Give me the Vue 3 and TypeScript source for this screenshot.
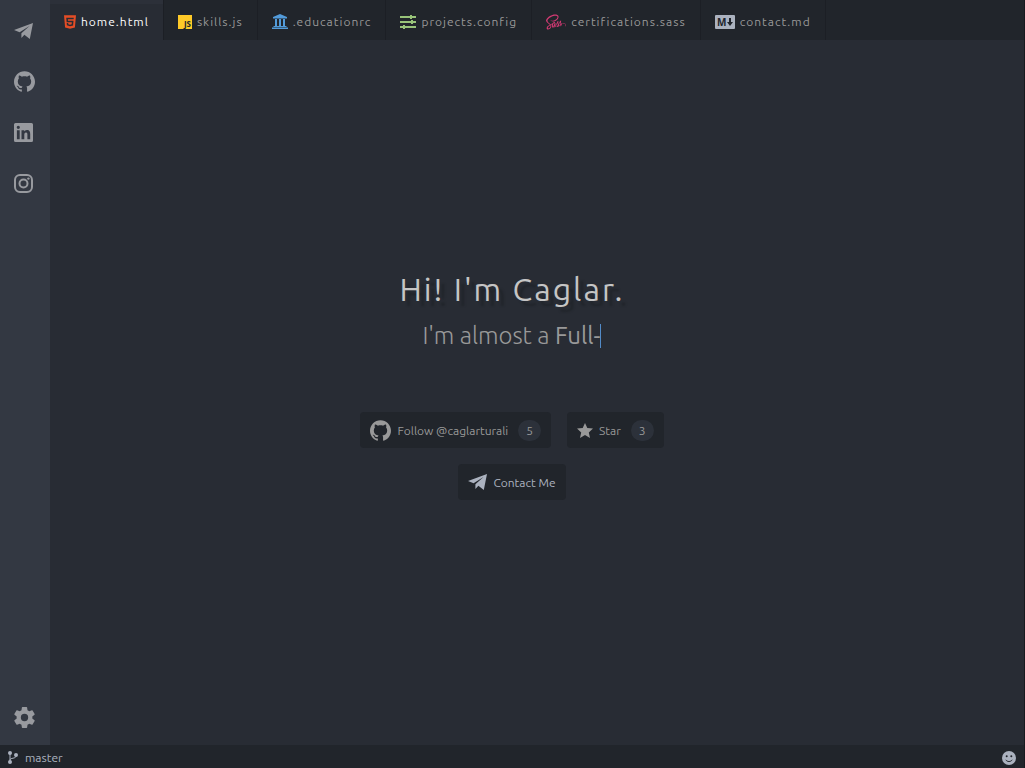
<script setup lang="ts">
interface Tab {
  id: string
  label: string
}

const tabs: Tab[] = [
  { id: 'html', label: 'home.html' },
  { id: 'js', label: 'skills.js' },
  { id: 'education', label: '.educationrc' },
  { id: 'config', label: 'projects.config' },
  { id: 'sass', label: 'certifications.sass' },
  { id: 'markdown', label: 'contact.md' },
]

const activeTab = 'html'

const githubPath =
  'M12 .297c-6.63 0-12 5.373-12 12 0 5.303 3.438 9.8 8.205 11.385.6.113.82-.258.82-.577 0-.285-.01-1.04-.015-2.04-3.338.724-4.042-1.61-4.042-1.61C4.422 18.07 3.633 17.7 3.633 17.7c-1.087-.744.084-.729.084-.729 1.205.084 1.838 1.236 1.838 1.236 1.07 1.835 2.809 1.305 3.495.998.108-.776.417-1.305.76-1.605-2.665-.3-5.466-1.332-5.466-5.93 0-1.31.465-2.38 1.235-3.22-.135-.303-.54-1.523.105-3.176 0 0 1.005-.322 3.3 1.23.96-.267 1.98-.399 3-.405 1.02.006 2.04.138 3 .405 2.28-1.552 3.285-1.23 3.285-1.23.645 1.653.24 2.873.12 3.176.765.84 1.23 1.91 1.23 3.22 0 4.61-2.805 5.625-5.475 5.92.42.36.81 1.096.81 2.22 0 1.606-.015 2.896-.015 3.286 0 .315.21.69.825.57C20.565 22.092 24 17.592 24 12.297c0-6.627-5.373-12-12-12'
const planePath = 'M19 0 0 7l5.600 2.300L15.500 3 7.400 10.200V15l3-3.300 5.400 4.300z'
</script>

<template>
  <div class="app">
    <nav class="sidebar" aria-label="Social links">
      <div class="links">
        <a href="#contact" aria-label="Contact">
          <svg class="plane" viewBox="0 0 19 16"><path :d="planePath" /></svg>
        </a>
        <a href="#github" aria-label="GitHub">
          <svg class="github" viewBox="0 0 24 24"><path :d="githubPath" /></svg>
        </a>
        <a href="#linkedin" aria-label="LinkedIn">
          <svg class="social" viewBox="0 0 19 19">
            <path fill-rule="evenodd" d="M1.500 0h16A1.500 1.500 0 0 1 19 1.500v16a1.500 1.500 0 0 1-1.500 1.500h-16A1.500 1.500 0 0 1 0 17.500v-16A1.500 1.500 0 0 1 1.500 0zM2.900 7.200v9h2.800v-9zM4.300 2.700a1.600 1.600 0 1 0 0 3.200 1.600 1.600 0 0 0 0-3.200zM7.500 7.200v9h2.800v-4.500c0-1.200.3-2.300 1.700-2.300s1.400 1.300 1.400 2.400v4.400h2.800v-5c0-2.400-.5-4.300-3.300-4.300-1.400 0-2.300.8-2.700 1.500V7.200z" />
          </svg>
        </a>
        <a href="#instagram" aria-label="Instagram">
          <svg class="social" viewBox="0 0 19 19">
            <rect class="line" x="1" y="1" width="17" height="17" rx="5" />
            <circle class="line" cx="9.500" cy="9.500" r="4" />
            <circle cx="14.400" cy="4.600" r="1.200" />
          </svg>
        </a>
      </div>
      <button type="button" class="settings" aria-label="Settings">
        <svg viewBox="2 2 20 20">
          <path d="M19.430 12.980c.04-.32.07-.64.07-.98s-.03-.66-.07-.98l2.110-1.650c.19-.15.24-.42.12-.64l-2-3.460c-.12-.22-.39-.3-.61-.22l-2.490 1c-.52-.4-1.080-.73-1.690-.98l-.38-2.650C14.460 2.180 14.250 2 14 2h-4c-.25 0-.46.18-.49.42l-.38 2.650c-.61.25-1.170.59-1.690.98l-2.490-1c-.23-.09-.49 0-.61.22l-2 3.460c-.13.22-.07.49.12.64l2.110 1.650c-.04.32-.07.65-.07.98s.03.66.07.98l-2.110 1.650c-.19.15-.24.42-.12.64l2 3.460c.12.22.39.3.61.22l2.490-1c.52.4 1.080.73 1.690.98l.38 2.650c.03.24.24.42.49.42h4c.25 0 .46-.18.49-.42l.38-2.650c.61-.25 1.170-.59 1.690-.98l2.490 1c.23.09.49 0 .61-.22l2-3.460c.12-.22.07-.49-.12-.64zM12 15.500a3.500 3.500 0 1 1 0-7 3.500 3.500 0 0 1 0 7z" />
        </svg>
      </button>
    </nav>

    <div class="workspace">
      <nav class="tabs" aria-label="Open files">
        <a
          v-for="tab in tabs"
          :key="tab.id"
          :href="'#' + tab.label"
          class="tab"
          :class="{ active: tab.id === activeTab }"
        >
          <svg v-if="tab.id === 'html'" class="icon-html" viewBox="1.500 0 21 24" aria-hidden="true">
            <path d="M1.500 0h21l-1.910 21.563L11.977 24l-8.564-2.438L1.500 0zm7.031 9.750l-.232-2.718 10.059.003.23-2.622L5.412 4.410l.698 8.010h9.126l-.326 3.426-2.910.804-2.955-.81-.188-2.110H6.248l.33 4.171L12 19.351l5.379-1.443.744-8.157H8.531z" />
          </svg>
          <svg v-else-if="tab.id === 'js'" class="icon-js" viewBox="0 0 14 14" aria-hidden="true">
            <rect width="14" height="14" />
            <text x="13" y="12" text-anchor="end">JS</text>
          </svg>
          <svg v-else-if="tab.id === 'education'" class="icon-education" viewBox="0 0 16 15" aria-hidden="true">
            <path d="M8 0l7 3v1.500H1V3zM3 5h2v7H3zM7 5h2v7H7zM11 5h2v7h-2zM1.500 12h13v1h-13zM0 13.500h16V15H0z" />
          </svg>
          <svg v-else-if="tab.id === 'config'" class="icon-config" viewBox="0 0 16 14" aria-hidden="true">
            <path d="M0 1h16v2H0zM0 6h16v2H0zM0 11h16v2H0zM10 0h2v4h-2zM11 5h2v4h-2zM3 10h2v4H3z" />
          </svg>
          <svg v-else-if="tab.id === 'sass'" class="icon-sass" viewBox="0 0 640 512" aria-hidden="true">
            <path d="M551 291.900a131.200 131.200 0 0 0-58 13.500c-5.900-11.900-12-22.300-13-30.100-1.200-9.100-2.500-14.500-1.100-25.300s7.700-26.100 7.600-27.200-1.400-6.600-14.300-6.700-24 2.500-25.300 5.900a122.800 122.800 0 0 0-5.300 19.100c-2.300 11.700-25.800 53.500-39.100 75.300-4.400-8.500-8.100-16-8.900-22-1.200-9.100-2.500-14.500-1.100-25.300s7.700-26.100 7.600-27.200-1.400-6.600-14.300-6.700-24 2.500-25.300 5.900-2.700 11.400-5.300 19.100-33.900 77.300-42.100 95.400c-4.200 9.200-7.800 16.600-10.400 21.600-5 9.500-7.700 14.200-8.900 14.200-.6 0-1.900-8.400.3-19.900 4.700-24.200 15.800-61.800 15.700-63.100-.1-.7 2.100-7.200-7.300-10.700-9.100-3.300-12.400 2.200-13.200 2.200s-1.400 2-1.400 2 10.100-42.400-19.400-42.400c-18.400 0-44 20.200-56.600 38.500-7.900 4.300-25 13.600-43 23.500-6.900 3.800-14 7.700-20.700 11.400-35.800-38.700-103.300-66.700-100.500-118 1-18.700 7.500-67.800 127.100-127.400 98-48.800 176.400-35.400 189.900-5.600 19.400 42.500-41.900 121.600-143.700 133-38.800 4.300-59.200-10.700-64.300-16.300-5.300-5.900-6.100-6.200-8.100-5.100-3.300 1.800-1.200 7 0 10.100 3 7.900 15.500 21.900 36.800 28.900 18.700 6.100 64.200 9.500 119.200-11.800 61.800-23.800 109.900-90.100 95.800-145.600C386.500 18.300 293 .2 204.600 31.600c-52.700 18.700-109.700 48.100-150.700 86.400C5.200 163.600-2.600 203.300.6 219.900c11.400 58.900 92.600 97.300 125.100 125.700-20 10.600-82.200 41.700-98.200 77.200-17.500 38.800 2.900 66.600 16.300 70.400 41.800 11.600 84.600-9.300 107.600-43.600s20.200-79.100 9.200-100.300c12-7.100 24-14.300 36.300-20.800-4 10.800-6.900 23.800-8.400 42.600-1.800 22 7.300 50.500 19.100 61.700 5.200 4.900 11.500 5 15.400 5 13.800 0 20-11.400 26.900-25 8.500-16.600 16-35.900 16-35.900s-9.400 52.200 16.300 52.200c9.400 0 18.800-12.100 23-18.300 4-6.300 14.300-24.500 26.800-49.900 16.200-31.800 31.700-71.500 31.700-71.500a201.200 201.200 0 0 0 6.200 25.800c2.800 9.500 8.700 19.900 13.400 30-5 7-9.900 13.200-15.900 20.900-12.800 15.200-28 32.600-30 37.600-2.400 5.900-1.800 10.300 2.800 13.700 3.400 2.600 9.400 3 15.700 2.500 11.500-.8 19.600-3.600 23.500-5.400a82.200 82.200 0 0 0 20.200-10.600c12.500-9.200 20.100-22.400 19.400-39.800-.4-9.600-3.500-19.200-7.300-28.200 19.100-28.200 38.700-71.900 38.700-71.900a201.200 201.200 0 0 0 6.200 25.800c2.400 8.100 7.100 17 11.400 25.700-18.600 15.100-30.100 32.600-34.100 44.100-7.400 21.300-1.600 30.900 9.300 33.100 4.900 1 11.900-1.300 17.100-3.500a79.500 79.500 0 0 0 21.600-11.100c12.500-9.200 24.600-22.100 23.800-39.600-.3-7.900-2.500-15.800-5.400-23.400 15.700-6.600 36.100-10.200 62.100-7.200 55.700 6.500 66.600 41.300 64.500 55.800s-13.800 22.600-17.700 25-5.100 3.300-4.800 5.100c.5 2.600 2.300 2.500 5.600 1.900 4.600-.8 29.200-11.800 30.300-38.700 1.600-34-31.100-71.400-89-71.100zM121.800 436.600c-18.400 20.100-44.200 27.700-55.300 21.300-12-6.900-7.200-36.500 15.500-57.900 13.800-13 31.600-25 43.400-32.400l15.500-9.300c8.300 30.400.3 57.200-19.100 78.300zM256.100 345.200c-6.400 15.700-19.900 55.700-28.100 53.600-7-1.800-11.300-32.300-1.400-62.300 5-15.100 15.600-33.100 21.900-40.100 10.100-11.300 21.200-14.900 23.800-10.400 3.500 5.900-12.200 49.400-16.200 59.200zM367.100 398.200c-2.700 1.400-5.200 2.300-6.400 1.600-.9-.5 1.100-2.400 1.100-2.400s13.900-14.900 19.400-21.700l10.900-13.900c.1 19.500-17.200 31.600-25 36.400zM452.700 378.700c-2-1.400-1.700-6.100 5-20.700 2.600-5.700 8.600-15.300 19-24.500a36.200 36.200 0 0 1 1.900 10.800c-.1 22.500-16.200 30.900-25.900 34.400z" />
          </svg>
          <svg v-else class="icon-markdown" viewBox="0 0 20 14" aria-hidden="true">
            <rect width="20" height="14" rx="1" />
            <text x="2" y="11">M</text>
            <path d="M14 3h2v4h2l-3 4-3-4h2z" />
          </svg>
          <span>{{ tab.label }}</span>
        </a>
      </nav>

      <main class="hero">
        <h1>Hi! I'm Caglar.</h1>
        <p class="role">I'm almost a <strong>Full-</strong><span class="cursor"></span></p>
        <div class="actions">
          <a href="#follow" class="action">
            <svg class="github" viewBox="0 0 24 24" aria-hidden="true"><path :d="githubPath" /></svg>
            <span>Follow @caglarturali</span>
            <span class="count">5</span>
          </a>
          <a href="#star" class="action">
            <svg class="star" viewBox="0 0 16 15" aria-hidden="true">
              <path d="M8 0l2.300 5 5.700.6-4.200 3.800L13 15l-5-2.900L3 15l1.200-5.600L0 5.600 5.700 5z" />
            </svg>
            <span>Star</span>
            <span class="count">3</span>
          </a>
        </div>
        <a href="#contact" class="action contact">
          <svg class="plane" viewBox="0 0 19 16" aria-hidden="true"><path :d="planePath" /></svg>
          <span>Contact Me</span>
        </a>
      </main>
    </div>

    <footer class="status">
      <a href="#master" class="branch">
        <svg viewBox="0 0 10 13" aria-hidden="true">
          <path class="line" d="M2 3v7M8 5c0 3-6 1.500-6 4" />
          <circle cx="2" cy="2" r="2" />
          <circle cx="2" cy="11" r="2" />
          <circle cx="8" cy="4" r="2" />
        </svg>
        <span>master</span>
      </a>
      <button type="button" aria-label="Feedback">
        <svg viewBox="0 0 14 14">
          <circle cx="7" cy="7" r="7" />
          <circle class="cut" cx="4.700" cy="5.200" r="1" />
          <circle class="cut" cx="9.300" cy="5.200" r="1" />
          <path class="smile" d="M3.800 8.800c1.400 2.300 5 2.300 6.400 0" />
        </svg>
      </button>
    </footer>
  </div>
</template>

<style>
body {
  margin: 0;
  background: #282c34;
}
</style>

<style scoped>
.app {
  box-sizing: border-box;
  display: grid;
  grid-template: 1fr 23px / 50px 1fr;
  min-height: 100vh;
  border-right: 1px solid #181a1f;
  background: #282c34;
  color: #999;
  font-family: Ubuntu, "Noto Sans", sans-serif;
  font-size: 12px;
}

a {
  color: inherit;
  text-decoration: none;
}

button {
  padding: 0;
  border: 0;
  background: none;
  color: inherit;
}

svg {
  display: block;
  flex: none;
  overflow: visible;
  fill: currentColor;
}

.line {
  fill: none;
  stroke: currentColor;
  stroke-width: 2;
}

.sidebar {
  display: flex;
  flex-direction: column;
  justify-content: space-between;
  background: #333842;
  color: #989a9f;
}

.links {
  display: flex;
  flex-direction: column;
  padding-top: 5px;
}

.links a {
  display: flex;
  align-items: center;
  height: 51px;
  padding-left: 14px;
}

.plane {
  width: 19px;
  height: 16px;
}

.github {
  width: 21px;
  height: 21px;
}

.social {
  width: 19px;
  height: 19px;
}

.settings {
  align-self: flex-start;
  margin: 0 0 17px 14px;
}

.settings svg {
  width: 21px;
  height: 21px;
}

.branch .line {
  stroke-width: 1;
}

.workspace {
  display: flex;
  flex-direction: column;
  min-width: 0;
}

.tabs {
  display: flex;
  height: 40px;
  background: #21252b;
}

.tab {
  display: flex;
  align-items: center;
  gap: 5px;
  padding: 3px 14px 0;
  border-right: 1px solid #1c1f25;
  letter-spacing: 1px;
  white-space: nowrap;
}

.tab.active {
  background: #282c34;
  box-shadow: inset 0 4px #2c3039;
  color: #fff;
}

.icon-html {
  width: 12px;
  height: 14px;
  color: #e44d26;
}

.icon-js {
  width: 14px;
  height: 14px;
  color: #ffca28;
}

.icon-js text {
  fill: #21252b;
  font: bold 8px "Open Sans", sans-serif;
  letter-spacing: 0;
}

.icon-education {
  width: 16px;
  height: 15px;
  color: #529bda;
}

.icon-config {
  width: 16px;
  height: 14px;
  color: #98c379;
}

.icon-sass {
  width: 20px;
  height: 16px;
  color: #d33a73;
}

.icon-markdown {
  width: 20px;
  height: 14px;
  color: #abb2bf;
}

.icon-markdown text,
.icon-markdown path {
  fill: #21252b;
}

.icon-markdown text {
  font: bold 10px "Open Sans", sans-serif;
  letter-spacing: 0;
}

.hero {
  display: flex;
  flex: 1;
  flex-direction: column;
  align-items: center;
  justify-content: center;
  padding: 0 50px 20px 0;
}

h1 {
  margin: 0;
  color: #c5c5c5;
  font-size: 32px;
  font-weight: 400;
  line-height: 48px;
  letter-spacing: 2px;
  text-shadow: 5px 5px 2px #21252b;
}

.role {
  display: flex;
  align-items: center;
  margin: 0 0 53px;
  font-size: 24px;
  font-weight: 300;
  line-height: 46px;
  white-space: pre;
}

.role strong {
  font-weight: 400;
}

.cursor {
  width: 1px;
  height: 24px;
  background: #528bc8;
}

.actions {
  display: flex;
  gap: 16px;
  margin-bottom: 16px;
}

.action {
  display: flex;
  align-items: center;
  gap: 6px;
  height: 36px;
  padding: 0 10px;
  border-radius: 4px;
  background: #21252b;
}

.contact {
  color: #abb2bf;
}

.star {
  width: 16px;
  height: 15px;
}

.count {
  margin-left: 4px;
  padding: 0 8px;
  border-radius: 12px;
  background: #2c313a;
  line-height: 21px;
}

.status {
  display: flex;
  grid-column: 1 / -1;
  align-items: center;
  justify-content: space-between;
  padding: 2px 8px 0;
  background: #21252b;
  color: #abb2bf;
}

.branch {
  display: flex;
  align-items: center;
  gap: 7px;
}

.branch svg {
  width: 10px;
  height: 13px;
}

.status button svg {
  width: 14px;
  height: 14px;
}

.cut {
  fill: #21252b;
}

.smile {
  fill: none;
  stroke: #21252b;
}
</style>
